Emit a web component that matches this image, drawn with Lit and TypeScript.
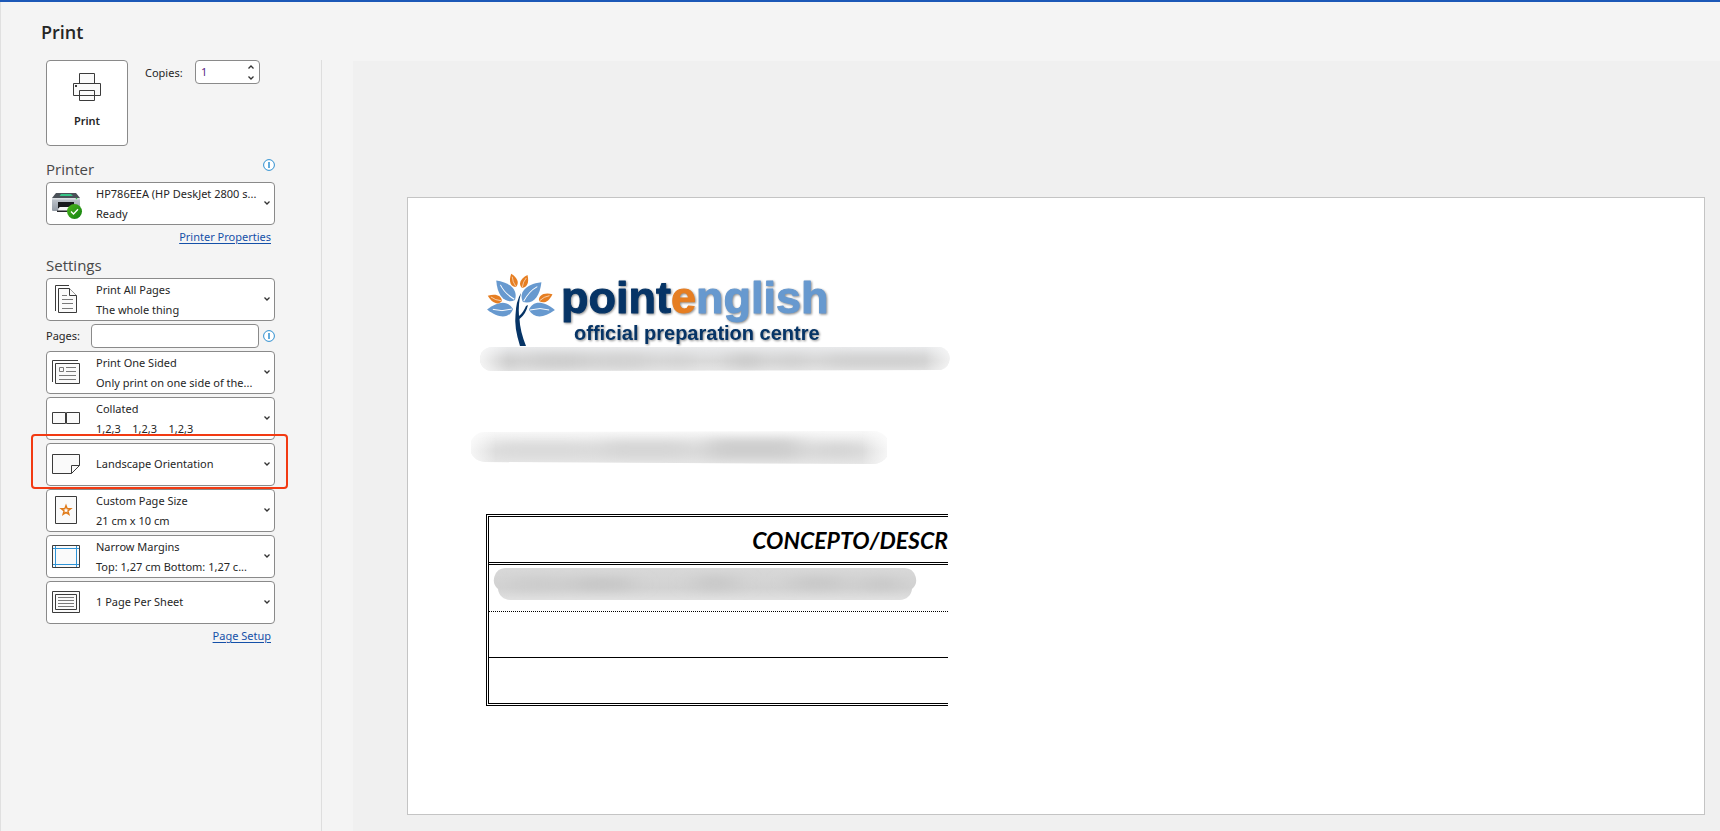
import { LitElement, html, css, svg, type SVGTemplateResult } from "lit";
import { customElement, property } from "lit/decorators.js";

type Setting = { id: string; label: string; title: string; detail?: string };

const ICONS: Record<string, SVGTemplateResult> = {
  device: svg`
    <defs>
      <linearGradient id="body" x1="0" y1="0" x2="0" y2="1"><stop offset="0" stop-color="#c3c9d0"/><stop offset="1" stop-color="#929aa4"/></linearGradient>
      <linearGradient id="ok" x1="0" y1="0" x2="1" y2="1"><stop offset="0" stop-color="#4db51d"/><stop offset="1" stop-color="#10800f"/></linearGradient>
    </defs>
    <path d="M4 4h20l4 5H0z" fill="#4b5158"/><path d="M9 5h10l2 2H7.500z" fill="#36c486"/>
    <path d="M0 9h28v12q0 1-1 1H1q-1 0-1-1z" fill="url(#body)"/><path d="M0 9h28v1.500H0z" fill="#dde1e5"/>
    <path d="M6 13h16v6H6z" fill="#17191c"/><path d="M7.500 18h13l1.500 5H5z" fill="#f5f5f5"/><path d="M5 21.500h17v1.500H5z" fill="#24272a"/>
    <circle cx="24.500" cy="9.500" r=".8" fill="#2fc94d"/>
    <circle cx="22.500" cy="22.500" r="7.500" fill="url(#ok)"/><path d="M19 22.500l2.500 2.500 4.500-4.800" fill="none" stroke="#fff" stroke-width="1.300"/>`,
  pages: svg`
    <g fill="#fafafa" stroke="#3b3b3b"><path d="M3.500 26V.5H17" fill="none"/><path d="M6.500 3.500h11l7 7v17h-18z"/><path d="M17.500 3.500v7h7" /></g>
    <path d="M10 10.500h5M10 14.500h11M10 18.500h11M10 23.500h11" stroke="#797979"/>`,
  sided: svg`
    <g fill="#fafafa" stroke="#3b3b3b"><path d="M.5 24V2.500H26" fill="none"/><path d="M3.500 5.500h24v20h-24z"/></g>
    <path d="M7.500 9.500h4v4h-4zM14 9.500h10M14 13.500h10M7 17.500h17M7 21.500h17" fill="none" stroke="#797979"/>`,
  collated: svg`<path d="M.5 8.500h13v11H.5zM14.500 8.500h13v11h-13z" fill="#fafafa" stroke="#3b3b3b"/>`,
  landscape: svg`<path d="M.5 4.500h27v11l-8 8H.5z" fill="#fafafa" stroke="#3b3b3b"/><path d="M19.500 23.500v-8h8" fill="none" stroke="#3b3b3b"/>`,
  size: svg`<path d="M3.500.5h21v27h-21z" fill="#fafafa" stroke="#3b3b3b"/>
    <path d="M14 9.500l1.200 3.300h3.500l-2.800 2.200 1 3.400-2.900-2-2.900 2 1-3.400-2.800-2.200h3.500z" fill="#fff" stroke="#e07b1a" stroke-width="1.400"/>`,
  margins: svg`<path d="M.5 3.500h27v22H.5z" fill="#fafafa" stroke="#3b3b3b"/>
    <path d="M3.500 4v21M24.500 4v21M1 6.500h26M1 22.500h26" stroke="#2e93d6"/>`,
  sheet: svg`<path d="M.5 3.500h27v21H.5zM3.500 6.500h21v15h-21z" fill="#fafafa" stroke="#3b3b3b"/>
    <path d="M6 9.500h16M6 12.500h16M6 15.500h16M6 18.500h16" stroke="#797979"/>`,
};

@customElement("setting-picker")
class SettingPicker extends LitElement {
  @property({ attribute: false }) setting!: Setting;

  static styles = css`
    :host { display: block; }
    .box { display: grid; height: 43px; box-sizing: border-box; border: 1px solid #8a8a8a; border-radius: 4px; background: #fff; overflow: hidden; }
    .box > * { grid-area: 1 / 1; }
    .picker { appearance: none; border: 0; background: none; font: inherit; color: #262626; width: 100%; height: 100%; padding: 0 11px 1px 49px; line-height: 20px; outline-offset: -2px; }
    .picker.two { padding-bottom: 20px; }
    .overlay { display: flex; align-items: flex-end; pointer-events: none; padding: 0 4px 0 5px; }
    .icon { width: 28px; height: 28px; overflow: visible; align-self: center; margin-bottom: 1px; }
    .detail { flex: 1; padding-left: 16px; line-height: 20px; white-space: pre; }
    .chevron { width: 6px; height: 4px; align-self: center; margin-bottom: 1px; }
  `;

  render() {
    const { id, label, title, detail } = this.setting;
    return html`<div class="box">
      <select class="picker ${detail ? "two" : ""}" aria-label=${label} aria-describedby="detail"><option>${title}</option></select>
      <div class="overlay">
        <svg class="icon" viewBox="0 0 28 28" aria-hidden="true">${ICONS[id]}</svg>
        <span class="detail" id="detail">${detail ?? ""}</span>
        <svg class="chevron" viewBox="0 0 6 4" aria-hidden="true"><path d="M.5.5L3 3 5.500.5" fill="none" stroke="#333" stroke-width="1.300"/></svg>
      </div>
    </div>`;
  }
}

@customElement("print-options")
class PrintOptions extends LitElement {
  static styles = css`
    :host { display: block; color: #262626; font: 11px/20px "Noto Sans", "Open Sans", sans-serif; }
    .top { display: flex; align-items: flex-start; }
    .print { width: 82px; height: 86px; box-sizing: border-box; border: 1px solid #8a8a8a; border-radius: 4px; background: #fff; color: #262626; font: 600 11px/20px "Noto Sans", sans-serif; display: flex; flex-direction: column; align-items: center; gap: 10px; padding: 12px 0 0; }
    .print svg { width: 28px; height: 28px; }
    .copies { width: 50px; padding: 3px 0 0 17px; }
    .field { height: 24px; box-sizing: border-box; border: 1px solid #8a8a8a; border-radius: 4px; background: #fff; display: flex; }
    .number { width: 65px; }
    .entry { appearance: textfield; flex: 1; min-width: 0; border: 0; background: none; padding: 0 0 0 5px; font: inherit; color: #262626; outline-offset: 1px; }
    .number .entry { color: #5b1f86; }
    .entry::-webkit-inner-spin-button { display: none; }
    .steps { display: flex; flex-direction: column; width: 16px; }
    .step { flex: 1; border: 0; padding: 0; background: none; display: grid; place-items: center; }
    .step svg { width: 6px; height: 4px; }
    .head { display: flex; justify-content: space-between; height: 36px; box-sizing: border-box; padding-top: 12px; }
    .head.settings { height: 31px; padding-top: 7px; }
    .heading { margin: 0; font: 500 15px/22px "Open Sans", sans-serif; color: #484848; }
    .info { border: 0; background: none; padding: 0; width: 12px; height: 12px; display: block; }
    .head .info { margin-top: 1px; }
    .info svg { width: 12px; height: 12px; display: block; }
    .linkrow { display: flex; justify-content: flex-end; padding: 2px 4px 0 0; }
    .link { color: #1450a8; text-underline-offset: 2px; }
    .stack { display: flex; flex-direction: column; gap: 3px; }
    .pages { display: flex; align-items: center; }
    .pages label { width: 45px; }
    .pages .field { flex: 1; margin-right: 4px; }
    .marked { position: relative; }
    .mark { position: absolute; inset: -9px -13px -3px -15px; border: 2px solid #f23a12; border-radius: 4px; pointer-events: none; z-index: 1; }
  `;

  private info(label: string) {
    return html`<button class="info" aria-label=${label}>
      <svg viewBox="0 0 12 12"><circle cx="6" cy="6" r="5.400" fill="#fff" stroke="#2e8fd0"/><path d="M6 3v6" stroke="#2e8fd0" stroke-width="1.500"/></svg>
    </button>`;
  }

  private picker(id: string, label: string, title: string, detail?: string) {
    return html`<setting-picker .setting=${{ id, label, title, detail }}></setting-picker>`;
  }

  render() {
    return html`
      <div class="top">
        <button class="print">
          <svg viewBox="0 0 28 28" fill="#fafafa" stroke="#3b3b3b" aria-hidden="true">
            <path d="M6.500.5h15v10h-15zM.5 10.500h27v12H.5zM6.500 17.500h15v10h-15z"/><path d="M2 12h2v2H2z" fill="#3b3b3b" stroke="none"/>
          </svg>Print
        </button>
        <label class="copies" for="copies">Copies:</label>
        <div class="field number">
          <input class="entry" id="copies" type="number" min="1" value="1" />
          <div class="steps">
            <button class="step" aria-label="More copies"><svg viewBox="0 0 6 4"><path d="M.5 3.500L3 1l2.500 2.500" fill="none" stroke="#333" stroke-width="1.300"/></svg></button>
            <button class="step" aria-label="Fewer copies"><svg viewBox="0 0 6 4"><path d="M.5.5L3 3 5.500.5" fill="none" stroke="#333" stroke-width="1.300"/></svg></button>
          </div>
        </div>
      </div>
      <div class="head"><h2 class="heading">Printer</h2>${this.info("Printer status")}</div>
      ${this.picker("device", "Printer", "HP786EEA (HP DeskJet 2800 s...", "Ready")}
      <div class="linkrow"><a class="link" href="#printer">Printer Properties</a></div>
      <div class="head settings"><h2 class="heading">Settings</h2></div>
      <div class="stack">
        ${this.picker("pages", "Pages to print", "Print All Pages", "The whole thing")}
        <div class="pages">
          <label for="pages">Pages:</label>
          <div class="field"><input class="entry" id="pages" type="text" /></div>
          ${this.info("Page range help")}
        </div>
        ${this.picker("sided", "Sides", "Print One Sided", "Only print on one side of the...")}
        ${this.picker("collated", "Collation", "Collated", "1,2,3    1,2,3    1,2,3")}
        <div class="marked">${this.picker("landscape", "Orientation", "Landscape Orientation")}<div class="mark"></div></div>
        ${this.picker("size", "Paper size", "Custom Page Size", "21 cm x 10 cm")}
        ${this.picker("margins", "Margins", "Narrow Margins", "Top: 1,27 cm Bottom: 1,27 c...")}
        ${this.picker("sheet", "Pages per sheet", "1 Page Per Sheet")}
      </div>
      <div class="linkrow"><a class="link" href="#setup">Page Setup</a></div>`;
  }
}

@customElement("sheet-preview")
class SheetPreview extends LitElement {
  static styles = css`
    :host { display: block; box-sizing: border-box; background: #fff; border: 1px solid #c4c4c4; padding: 75px 0 0 63px; overflow: hidden; }
    .brand { display: block; margin-left: 15px; width: 360px; height: 73px; overflow: visible; font-family: "Liberation Sans", Arial, sans-serif; font-weight: bold; }
    .words { filter: drop-shadow(1px 1px 1px rgb(0 0 0 / 45%)); }
    .name { font-size: 45px; fill: #063466; stroke: #063466; stroke-width: 1px; stroke-linejoin: round; }
    .e { fill: #e67e22; stroke: #e67e22; }
    .rest { fill: #6799cf; stroke: #6799cf; }
    .tag { font-size: 20px; fill: #063466; }
    .smudge { display: block; }
    .first { margin-left: 9px; width: 473px; height: 25px; }
    .second { margin-top: 60px; width: 416px; height: 33px; }
    .clip { margin: 50px 0 0 15px; width: 462px; overflow: hidden; }
    .table { width: 100%; border-collapse: separate; border-spacing: 0; border: 3px double #000; border-right: 0; }
    .table td, .table th { padding: 0; height: 45px; }
    .table th { border-bottom: 3px double #000; text-align: right; font: italic bold 23px/28px Lato, Carlito, sans-serif; color: #000; }
    .table .dots { border-bottom: 1px dotted #000; height: 46px; vertical-align: top; }
    .table .line { border-bottom: 1px solid #000; }
    .third { margin: 3px 0 0 4px; width: 424px; height: 33px; }
  `;

  private leaf(x: number, y: number, angle: number, size: number, fill: string) {
    return svg`<g transform="translate(${x} ${y}) rotate(${angle}) scale(${size})">
      <path d="M0 0C3-9 14-11 27 0 15 9 5 9 0 0z" fill=${fill}/><path d="M1 0Q12-3 21 0" fill="none" stroke="#fff" stroke-width="1"/></g>`;
  }

  private smudge(cls: string, w: number, h: number, shape: string, tones: string[], blobs: number[][]) {
    return html`<svg class="smudge ${cls}" viewBox="0 0 ${w} ${h}" preserveAspectRatio="none" aria-hidden="true">
      <defs><clipPath id=${cls}><path d=${shape}/></clipPath>
      <linearGradient id="${cls}-tone" x1="0" y1="0" x2="0" y2="1"><stop offset="0" stop-color=${tones[0]}/><stop offset=".6" stop-color=${tones[1]}/><stop offset="1" stop-color=${tones[2]}/></linearGradient>
      <linearGradient id="${cls}-edge"><stop offset="0" stop-color="#fff" stop-opacity=".7"/><stop offset=".06" stop-color="#fff" stop-opacity="0"/><stop offset=".94" stop-color="#fff" stop-opacity="0"/><stop offset="1" stop-color="#fff" stop-opacity=".7"/></linearGradient>
      <filter id="${cls}-soft" x="-20%" y="-100%" width="140%" height="300%"><feGaussianBlur stdDeviation="12 5"/></filter></defs>
      <g clip-path="url(#${cls})"><rect width=${w} height=${h} fill="url(#${cls}-tone)"/>
      <g filter="url(#${cls}-soft)">${blobs.map(([x, y, bw, bh, g]) => svg`<rect x=${x} y=${y} width=${bw} height=${bh} fill="rgb(${g} ${g} ${g})"/>`)}</g>
      ${cls === "third" ? "" : svg`<rect width=${w} height=${h} fill="url(#${cls}-edge)"/>`}</g>
    </svg>`;
  }

  render() {
    const blue = "#6799cf";
    const orange = "#e67e22";
    return html`
      <svg class="brand" viewBox="0 0 360 73">
        ${this.leaf(29, 27, 226, 1, blue)}${this.leaf(37, 29, -47, 1, blue)}
        ${this.leaf(27, 36, 179, 0.96, blue)}${this.leaf(43, 37, 0, 0.96, blue)}
        ${this.leaf(30, 14, 250, 0.52, orange)}${this.leaf(36, 15, -67, 0.52, orange)}
        ${this.leaf(16, 28, 200, 0.56, orange)}${this.leaf(53, 28, -27, 0.56, orange)}
        <path d="M35 20Q32 31 33 43 37 40 40 33L42 32Q40 41 33.500 46 34 58 40 73H34Q28 54 29.500 42 30 28 35 20z" fill="#063466"/>
        <g class="words">
          <text class="name" x="75" y="40">point<tspan class="e">e</tspan><tspan class="rest">nglish</tspan></text>
          <text class="tag" x="88" y="67">official preparation centre</text>
        </g>
      </svg>
      ${this.smudge("first", 473, 25, "M12 1H461a12 12 0 0 1 0 23L12 25a12 12 0 0 1 0-24z", ["#eaebed", "#dadada", "#e6e6e6"], [
        [14, 9, 20, 14, 200], [48, 8, 62, 14, 206], [116, 8, 56, 14, 210], [190, 8, 18, 14, 208], [250, 8, 32, 14, 202], [302, 8, 20, 14, 204], [344, 9, 110, 12, 208],
      ])}
      ${this.smudge("second", 416, 33, "M14 1L402 0a14 14 0 0 1 0 33L14 31a14 14 0 0 1 0-30z", ["#f8f8f8", "#e0e0e0", "#e6e6e6"], [
        [24, 12, 98, 14, 218], [130, 10, 90, 17, 214], [234, 8, 96, 20, 206], [342, 12, 50, 15, 214],
      ])}
      <div class="clip">
        <table class="table">
          <tr><th scope="col">CONCEPTO/DESCR</th></tr>
          <tr><td class="dots">${this.smudge("third", 424, 33, "M12 0H412a12 12 0 0 1 7 21 12 12 0 0 1-12 11H17A12 12 0 0 1 5 21 12 12 0 0 1 12 0z", ["#d8d8d8", "#d2d2d2", "#e2e2e2"], [
            [20, 10, 50, 12, 204], [80, 10, 58, 12, 198], [204, 8, 38, 14, 200], [300, 9, 50, 12, 200], [370, 10, 36, 12, 200],
          ])}</td></tr>
          <tr><td class="line"></td></tr>
          <tr><td></td></tr>
        </table>
      </div>`;
  }
}

@customElement("app-root")
class AppRoot extends LitElement {
  static styles = css`
    :host { display: flex; flex-direction: column; box-sizing: border-box; min-height: 100vh; background: #f4f4f4; border-top: 2px solid #1c58b7; font-family: "Open Sans", "Noto Sans", sans-serif; }
    .page { flex: 1; display: flex; flex-direction: column; border-left: 1px solid #e0e0e0; }
    .title { margin: 0; padding: 16px 0 14px 40px; font-size: 18px; line-height: 28px; font-weight: 600; color: #262626; }
    .main { flex: 1; display: flex; }
    .options { width: 229px; flex: none; padding: 0 46px 0 45px; border-right: 1px solid #dedede; }
    .canvas { flex: 1; min-width: 0; display: flex; margin: 1px 0 0 31px; padding: 136px 15px 16px 54px; background: #f0f0f0; }
    .sheet { flex: 1; min-width: 0; }
  `;

  render() {
    return html`<div class="page">
      <h1 class="title">Print</h1>
      <main class="main">
        <print-options class="options"></print-options>
        <section class="canvas" aria-label="Print preview"><sheet-preview class="sheet"></sheet-preview></section>
      </main>
    </div>`;
  }
}
